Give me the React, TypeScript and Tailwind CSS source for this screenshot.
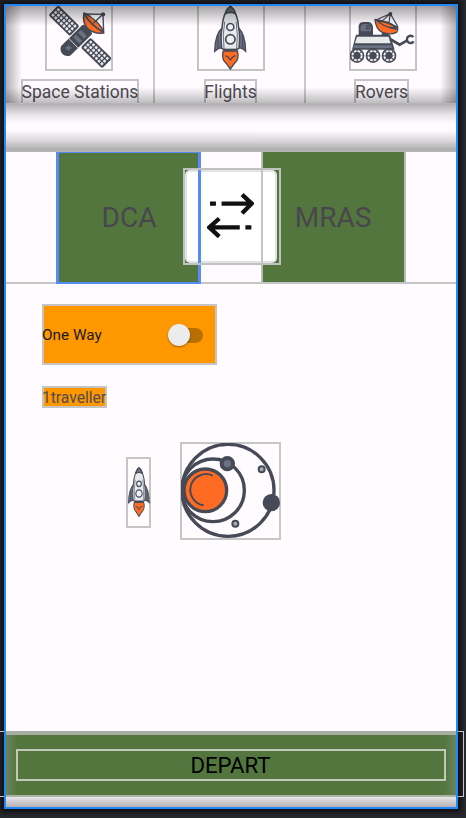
import type { ReactNode } from "react";

const INK = "#464a57";
const STEEL = "#6a7180";
const FLAME = "#ff6b22";

function SolarPanel({ x, y }: { x: number; y: number }) {
  const dots = [];
  for (let c = 0; c < 7; c++)
    for (let r = 0; r < 3; r++)
      dots.push(<rect key={`${c}-${r}`} x={-39 + c * 11.6} y={-15.5 + r * 11.4} width="8" height="8" rx="2" fill="#e9e8ec" />);
  return (
    <g transform={`translate(${x} ${y}) rotate(44.5)`}>
      <rect x="-45" y="-21" width="90" height="42" rx="6" fill={INK} />
      {dots}
    </g>
  );
}

function SatelliteIcon() {
  return (
    <svg viewBox="138 12 201 201" className="block size-[67px]">
      <SolarPanel x={192} y={62} />
      <SolarPanel x={289} y={159} />
      <g transform="translate(226 124) rotate(-44.5)">
        <path d="M-40 -20H48Q54 -20 54 -14V14Q54 20 48 20H-40Q-54 14 -54 0T-40 -20Z" fill={INK} />
        <path d="M-34 -10L-28 -5L-21 -8L-23 0L-20 8L-28 5L-35 9L-34 1L-39 -4L-34 -4Z" fill={STEEL} />
        <path d="M-8 -21V21" stroke="#e9e8ec" strokeWidth="2.5" />
        <rect x="4" y="-13" width="12" height="26" fill={STEEL} />
        <rect x="24" y="-13" width="12" height="26" fill={STEEL} />
      </g>
      <path d="M252 39Q247 70 263 86Q284 103 311 99Q301 62 252 39Z" fill={FLAME} stroke={INK} strokeWidth="5" strokeLinejoin="round" />
      <path d="M253 42Q272 75 309 96" fill="none" stroke={INK} strokeWidth="5" />
      <path d="M272 49L304 45L306 80Q292 62 272 49Z" fill="#fff" />
      <path d="M258 42L309 43L311 96M307 44L280 70" stroke={INK} strokeWidth="4" fill="none" />
      <circle cx="309" cy="43" r="6.5" fill={INK} />
    </svg>
  );
}

function RocketIcon({ className, viewBox }: { className: string; viewBox: string }) {
  return (
    <svg viewBox={viewBox} preserveAspectRatio="none" className={className}>
      <path d="M218 82Q195 102 194 154Q206 143 219 143ZM264 82Q286 102 287 154Q276 143 263 143Z" fill={STEEL} stroke={INK} strokeWidth="4" />
      <path d="M204 104V146M278 104V146" stroke={INK} strokeWidth="3" />
      <path d="M220 153H262Q267 166 261 181L251 193L241 207L231 193L221 181Q215 166 220 153Z" fill={FLAME} stroke={INK} strokeWidth="4" />
      <path d="M226 167L234 171L241 180L248 171L256 167" fill="none" stroke={INK} strokeWidth="4" />
      <path d="M241 19Q218 40 216 84Q211 107 215 145L223 149H259L267 145Q271 107 266 84Q264 40 241 19Z" fill="#e7e9ec" stroke={INK} strokeWidth="4.5" />
      <path d="M224 65Q217 102 222 147M258 65Q265 102 260 147" fill="none" stroke={STEEL} strokeWidth="3" />
      <path d="M241 19Q228 26 226 41Q241 34 256 41Q254 26 241 19Z" fill={STEEL} stroke={INK} strokeWidth="4" />
      <path d="M220 149H262" stroke={INK} strokeWidth="6" />
      <circle cx="241" cy="81" r="10.5" fill="#eff0f2" stroke={INK} strokeWidth="5" />
      <circle cx="241" cy="118" r="14" fill="#eff0f2" stroke={INK} strokeWidth="5" />
    </svg>
  );
}

function RoverIcon() {
  return (
    <svg viewBox="147 12 201 201" className="block size-[67px]">
      <path d="M173 105V79Q174 66 188 66H202Q214 67 216 81V105Z" fill={INK} />
      <path d="M179 94V82Q180 72 190 72H200Q209 74 210 84V94Z" fill={STEEL} />
      <circle cx="201" cy="82" r="5" fill={STEEL} stroke={INK} strokeWidth="4" />
      <path d="M246 93L240 107H266L258 95Z" fill={INK} />
      <path d="M223 61L268 41L290 79M268 41L263 73M268 41L238 68" fill="none" stroke={INK} strokeWidth="3.5" />
      <path d="M222 58Q225 89 244 97Q268 106 287 97Q292 91 290 80Q258 79 222 58Z" fill={FLAME} stroke={INK} strokeWidth="4" strokeLinejoin="round" />
      <path d="M222 58Q258 59 290 80L288 89Q246 86 222 58Z" fill={INK} />
      <path d="M236 66Q258 68 279 81Q253 81 236 66Z" fill={FLAME} />
      <circle cx="268" cy="42" r="6" fill={INK} />
      <path d="M165 104H267L281 149H153Z" fill={INK} />
      <path d="M168 110H263L269 130H162Z" fill="#e8e9eb" />
      <path d="M160 136H272L274 145H157Z" fill={STEEL} />
      <path d="M267 117L296 134L319 121" fill="none" stroke={INK} strokeWidth="8" />
      <path d="M337 111A11 11 0 1 0 338 124" fill="none" stroke={INK} strokeWidth="7" />
      {[168, 216, 264].map((x) => (
        <g key={x}>
          <circle cx={x} cy="167" r="22" fill={INK} />
          <circle cx={x} cy="167" r="14" fill="none" stroke="#f4f2f5" strokeWidth="6" strokeDasharray="8 3" />
          <circle cx={x} cy="167" r="10" fill={INK} />
        </g>
      ))}
    </svg>
  );
}

function PlanetIcon() {
  return (
    <svg viewBox="213 39 297 288" className="-mt-px -ml-px block h-[96px] w-[99px]">
      <g fill="none" stroke={INK} strokeWidth="10">
        <circle cx="354" cy="181" r="138" />
        <circle cx="309" cy="181" r="94" />
      </g>
      <path d="M218 174Q216 205 238 246L226 232Q211 195 218 174Z" fill={INK} stroke={INK} strokeWidth="4" />
      <circle cx="286" cy="181" r="64" fill={FLAME} stroke={INK} strokeWidth="10" />
      <path d="M308 137A47 47 0 1 0 281 226" fill="none" stroke={INK} strokeWidth="6" />
      <circle cx="352" cy="101" r="17" fill={STEEL} stroke={INK} strokeWidth="12" />
      <circle cx="484" cy="218" r="26" fill={INK} />
      <circle cx="455" cy="118" r="9" fill="#aaaab3" stroke={INK} strokeWidth="6" />
      <circle cx="376" cy="281" r="9" fill="#aaaab3" stroke={INK} strokeWidth="6" />
    </svg>
  );
}

function SwapIcon() {
  return (
    <svg viewBox="110 160 142 134" className="mr-[2px] mb-[2px] block h-[45px] w-[47px]" fill="none" stroke="#111" strokeWidth="13">
      <path d="M119 191H137M154 191H245M216 164L245 191L216 220" />
      <path d="M244 263H226M209 263H117M147 236L117 263L147 291" />
    </svg>
  );
}

function Tab({ label, labelClass, width, iconClass, children }: { label: string; labelClass: string; width: string; iconClass: string; children: ReactNode }) {
  return (
    <div className={`flex h-full shrink-0 flex-col items-start ${width}`}>
      <div className={`h-[65px] w-[68px] border-2 border-t-0 border-[#c3c5c4] ${iconClass}`}>
        <div className="-mt-[2px] -ml-[1px] w-[67px]">{children}</div>
      </div>
      <div className={`mt-[8px] flex h-[25px] shrink-0 items-center justify-center border-2 border-b-0 border-[#c3c5c4] text-[17.5px] leading-none whitespace-nowrap text-[#514d56] ${labelClass}`}>
        {label}
      </div>
    </div>
  );
}

export default function App() {
  return (
    <div className="relative h-[818px] w-[466px] overflow-hidden bg-[#28292d] pt-1 pl-1 font-['Roboto',sans-serif]">
      <div className="flex h-[805px] w-[454px] flex-col border-2 border-[#2188f5] bg-[#fffbff] shadow-[0_0_5px_3px_#0d0e10]">
        <header className="relative flex h-[97px] shrink-0">
          <Tab label="Space Stations" width="w-[149px] border-r-2 border-[#c9cac9]" iconClass="ml-[39px]" labelClass="ml-[15px] w-[118px]">
            <SatelliteIcon />
          </Tab>
          <Tab label="Flights" width="w-[151px] border-r-2 border-[#c9cac9]" iconClass="ml-[42px]" labelClass="ml-[49px] w-[53px]">
            <RocketIcon className="block size-[67px]" viewBox="144 12 201 201" />
          </Tab>
          <Tab label="Rovers" width="w-[150px]" iconClass="ml-[43px]" labelClass="ml-[48px] w-[55px]">
            <RoverIcon />
          </Tab>
          <div className="pointer-events-none absolute inset-0 flex flex-col justify-between">
            <div className="h-5 bg-linear-to-b from-black/35 to-transparent" />
            <div className="h-4 bg-linear-to-t from-black/25 to-transparent" />
          </div>
          <div className="pointer-events-none absolute inset-0 flex justify-between">
            <div className="w-4 bg-linear-to-r from-black/30 to-transparent" />
            <div className="w-4 bg-linear-to-l from-black/30 to-transparent" />
          </div>
        </header>

        <div className="h-[49px] shrink-0 border-y-2 border-[#b4b6b4] bg-[linear-gradient(to_bottom,#b5b3b5_0,#e9e6e9_10px,#fffbff_19px,#fffbff_25px,#e2dfe2_34px,#a9a8a9_46px)]" />

        <section className="relative flex h-[132px] shrink-0 border-b-2 border-[#c4c5c4] pl-[50px]">
          <div className="flex h-[132px] w-[145px] items-center justify-center border-x-[3px] border-t border-b-[2px] border-[#568bf5] bg-[#52763d] pl-px text-[28px] text-[#49464e]">
            DCA
          </div>
          <div className="ml-[60px] flex h-[130px] w-[145px] items-center justify-center border-x-2 border-[#b9bdb8] bg-[#52763d] pt-[2px] text-[28px] text-[#49464e]">
            <span className="-ml-px">MRAS</span>
          </div>
          <div className="absolute top-[16px] left-[177px] h-[97px] w-[98px] border-2 border-[#bfc2bf]">
            <div className="flex h-[93px] w-[92px] items-center justify-center rounded-[5px] border-2 border-[#e2e3e7] bg-white">
              <SwapIcon />
            </div>
            <div className="absolute top-0 left-[13px] h-[93px] w-[3px] bg-[#568bf5]" />
            <div className="absolute top-0 left-[76px] h-[93px] w-[2px] bg-[#c4c5c4]" />
          </div>
        </section>

        <main className="flex min-h-0 flex-1 flex-col items-start pl-[36px]">
          <div className="mt-[20px] flex h-[61px] w-[175px] shrink-0 items-center justify-between border-2 border-[#c7c3c0] bg-[#ff9800] pt-px pr-[12px] text-[#1b1a1c]">
            <span className="-ml-[2px] text-[15.3px]">One Way</span>
            <div className="relative h-[15px] w-[31px] rounded-full bg-[#b96e00]">
              <div className="absolute -top-[4px] -left-[4px] size-[22px] rounded-full bg-[#ececec] shadow-[0_1px_2px_rgba(0,0,0,0.4)]" />
            </div>
          </div>
          <div className="mt-[21px] flex h-[22px] w-[65px] shrink-0 items-center justify-center border-2 border-[#c7c3c0] bg-[#ff9800] pt-[4px] pr-px text-[15.6px] leading-none text-[#514c50]">
            1traveller
          </div>
          <div className="mt-[34px] ml-[84px] flex shrink-0 items-start">
            <div className="mt-[15px] flex h-[71px] w-[25px] items-center justify-center border-2 border-[#c5c7c5]">
              <RocketIcon className="mb-[2px] block h-[50px] w-[22px] shrink-0" viewBox="192 16 98 193" />
            </div>
            <div className="ml-[29px] h-[98px] w-[101px] border-2 border-[#c5c7c5]">
              <PlanetIcon />
            </div>
          </div>
        </main>

        <footer className="relative h-[76px] shrink-0 bg-linear-to-b from-[#e8e5e8] from-[87%] to-[#b3b1b3]">
          <div className="flex h-[66px] flex-col items-center border-t-[4px] border-b-2 border-t-[#a5aea1] border-b-[#a9b2a4] bg-[#52763d] bg-[linear-gradient(to_right,#6b8160_0,#52763d_12px,#52763d_438px,#6b8160_450px)]">
            <div className="mt-[14px] flex h-[32px] w-[430px] items-center justify-center border-2 border-[#c0c8b8] pt-px pr-px text-[22.2px] leading-none text-black">
              DEPART
            </div>
          </div>
          <div className="absolute top-0 -right-[8px] h-[66px] w-[6px] border border-l-0 border-[#c5c6c5]" />
          <div className="absolute top-0 -left-[6px] h-[66px] w-[4px] border-y border-[#c5c6c5]" />
        </footer>
      </div>
    </div>
  );
}
